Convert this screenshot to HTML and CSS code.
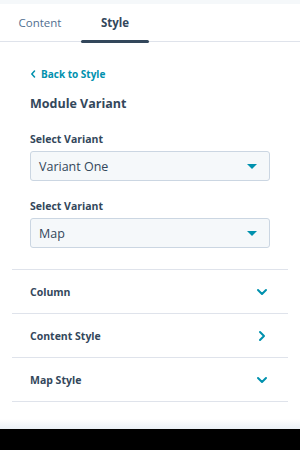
FILE: index.html
```html
<!DOCTYPE html>
<html lang="en">
<head>
    <meta charset="UTF-8">
    <meta name="viewport" content="width=device-width, initial-scale=1.0">
    <title>Module Style</title>
    <link rel="stylesheet" href="styles.css">
</head>
<body>
    <div class="top-strip"></div>

    <nav class="tabs">
        <div class="tab">Content</div>
        <div class="tab active">Style</div>
    </nav>

    <main class="panel">
        <a class="back-link" href="#">
            <svg width="6" height="8" viewBox="0 0 6 8"><path d="M4.5 1 L1.8 4 L4.5 7" fill="none" stroke="currentColor" stroke-width="1.5" stroke-linecap="round" stroke-linejoin="round"/></svg>
            <span>Back to Style</span>
        </a>

        <h2 class="section-title">Module Variant</h2>

        <div class="field">
            <label class="field-label">Select Variant</label>
            <div class="select-box">
                <span>Variant One</span>
                <span class="caret"></span>
            </div>
        </div>

        <div class="field">
            <label class="field-label">Select Variant</label>
            <div class="select-box">
                <span>Map</span>
                <span class="caret"></span>
            </div>
        </div>
    </main>

    <section class="accordion">
        <div class="acc-row">
            <span>Column</span>
            <svg class="chev" width="12" height="8" viewBox="0 0 12 8"><path d="M2 2 L6 6 L10 2" fill="none" stroke="currentColor" stroke-width="2" stroke-linecap="round" stroke-linejoin="round"/></svg>
        </div>
        <div class="acc-row">
            <span>Content Style</span>
            <svg class="chev" width="12" height="12" viewBox="0 0 12 12"><path d="M4 2 L8 6 L4 10" fill="none" stroke="currentColor" stroke-width="2" stroke-linecap="round" stroke-linejoin="round"/></svg>
        </div>
        <div class="acc-row">
            <span>Map Style</span>
            <svg class="chev" width="12" height="8" viewBox="0 0 12 8"><path d="M2 2 L6 6 L10 2" fill="none" stroke="currentColor" stroke-width="2" stroke-linecap="round" stroke-linejoin="round"/></svg>
        </div>
    </section>

    <div class="spacer"></div>
    <div class="footer-fade"></div>
    <div class="footer-bar"></div>
</body>
</html>
```

FILE: styles.css
```css
* {
    margin: 0;
    padding: 0;
    box-sizing: border-box;
}

body {
    font-family: 'Open Sans', Lato, sans-serif;
    color: #33475b;
    background: #fff;
    height: 450px;
    display: flex;
    flex-direction: column;
    overflow: hidden;
}

.top-strip {
    height: 4px;
    background: #f5f8fa;
}

.tabs {
    display: flex;
    gap: 7px;
    padding-left: 6px;
    height: 38px;
    border-bottom: 1px solid #dfe3eb;
}

.tab {
    position: relative;
    width: 68px;
    display: flex;
    align-items: center;
    justify-content: center;
    font-size: 11.5px;
    color: #516f90;
}

.tab.active {
    font-weight: 700;
    color: #33475b;
}

.tab.active::after {
    content: '';
    position: absolute;
    left: 0;
    right: 0;
    bottom: -2px;
    height: 3px;
    border-radius: 2px;
    background: #33475b;
}

.panel {
    padding: 25px 30px 0;
}

.back-link {
    display: flex;
    align-items: center;
    gap: 5px;
    color: #0091ae;
    font-size: 10px;
    font-weight: 700;
    text-decoration: none;
    height: 14px;
}

.section-title {
    font-size: 12.5px;
    font-weight: 700;
    margin-top: 15px;
    line-height: 16px;
}

.field {
    margin-top: 20px;
}

.field + .field {
    margin-top: 18px;
}

.field-label {
    display: block;
    font-size: 10.5px;
    font-weight: 700;
    line-height: 14px;
    margin-bottom: 5px;
}

.select-box {
    height: 30px;
    background: #f5f8fa;
    border: 1px solid #cbd6e2;
    border-radius: 3px;
    display: flex;
    align-items: center;
    justify-content: space-between;
    padding: 0 12px 0 8px;
    font-size: 12.5px;
}

.caret {
    width: 0;
    height: 0;
    border-left: 5px solid transparent;
    border-right: 5px solid transparent;
    border-top: 5px solid #0091ae;
}

.accordion {
    margin: 21px 12px 0;
    border-top: 1px solid #dfe3eb;
}

.acc-row {
    height: 44px;
    display: flex;
    align-items: center;
    justify-content: space-between;
    padding: 0 20px 0 18px;
    border-bottom: 1px solid #dfe3eb;
    font-size: 10.5px;
    font-weight: 700;
}

.chev {
    color: #0091ae;
}

.spacer {
    flex: 1;
}

.footer-fade {
    height: 10px;
    background: linear-gradient(#fff, #eaf0f6);
}

.footer-bar {
    height: 21px;
    background: #000;
}
```
